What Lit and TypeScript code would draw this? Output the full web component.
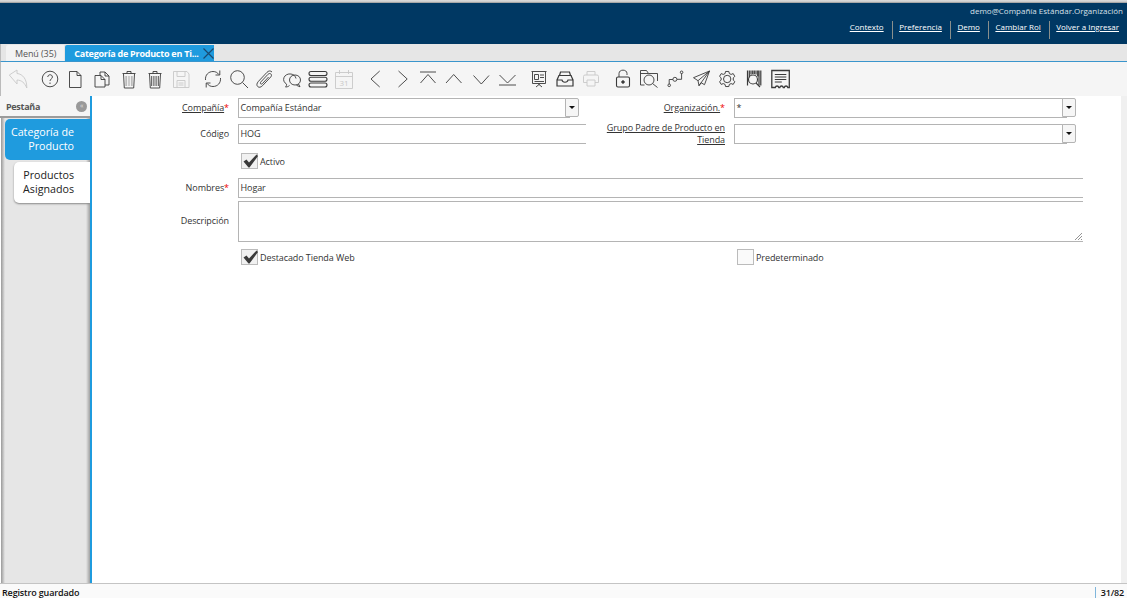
import { LitElement, html, css, svg } from "lit";
import { customElement } from "lit/decorators.js";

const S = (body: unknown) => html`<svg class="ic" viewBox="0 0 24 24" fill="none" stroke="currentColor" stroke-width=".9">${body}</svg>`;

const icons: [unknown, string, number][] = [
  [svg`<path d="M3.300 8L11 3v3.500c6 .5 10 6 9.800 14.500-2-5-5-7.800-9.800-8v4z"/>`, "off", 5],
  [svg`<circle cx="12" cy="12" r="7.800"/><path d="M9.800 10c0-3 4.600-3 4.600 0 0 2-2.400 2-2.400 4"/><path d="M12 15.500v1.500"/>`, "", 0],
  [svg`<path d="M5.500 4.500h7.500l4 4v12H5.500zM13 4.500v4h4"/>`, "", 0],
  [svg`<path d="M10 8V5h5l4 4v9h-4M15 5v4h4"/><path d="M5 8.500h6l4 4V20H5zM11 8.500v4h4"/>`, "", 0],
  [svg`<path d="M6.500 7l.8 14h9.400l.8-14M5.500 6.500h13M10 6.500V4.500h4v2"/><path d="M8.300 9h1.800v10H8.300zM11.300 9h1.400v10h-1.400zM13.900 9h1.800v10h-1.800z" fill="#bbb" stroke="none"/>`, "", 0],
  [svg`<path d="M6.500 7l.8 14h9.400l.8-14M5.500 6.500h13M10 6.500V4.500h4v2"/><path d="M8.700 9v10M10.900 9v10M13.100 9v10M15.300 9v10"/>`, "", 0],
  [svg`<path d="M4.500 4.500h13.500l2 2.500v13.500h-15.500zM8 4.500v5h8v-5M8 20.500v-7h8v7M9.500 16h5M9.500 18h5"/>`, "off", 5],
  [svg`<path d="M4.500 13c-.5-5 3-8.500 7.500-8.500 2.500 0 4.500 1 5.800 3M19.500 11c.5 5-3 8.500-7.500 8.500-2.500 0-4.500-1-5.800-3"/><path d="M18.800 3.500v4.500h-4.300M5.200 20.500V16h4.300"/>`, "", 0],
  [svg`<circle cx="10.500" cy="10.500" r="6.800"/><path d="M15.500 15.500l5.500 5.500"/>`, "", 0],
  [svg`<path d="M19 5c-1.500-1.500-3.500-1.300-5 .3l-8.500 9c-2 2.200-2 4 -.8 5.200 1.200 1.200 3 1.100 5-1l8-8.500c1-1.100 1-2.300.2-3-.8-.8-2-.6-3 .4l-7 7.500c-.7.8-.7 1.500-.2 1.900.5.500 1.200.3 1.900-.4l6-6.400"/>`, "", 0],
  [svg`<path d="M9.500 18.500c-1 1-2.500 1.500-4 1.500 1-1 1.200-2 1-3-2.500-1.300-3.500-4-2.500-6.500 1-2.500 4-4 7-3.500 2.500.4 4.500 2 5 4.500"/><path d="M20.500 13c0 3-2.500 5-5.500 5-3 0-5.500-2-5.500-5s2.500-5 5.500-5 5.500 2 5.500 5z"/><path d="M18.500 17l1.500 2.800-3.500-1.500"/>`, "", 0],
  [svg`<g stroke-width="1.100"><rect x="3" y="4.500" width="18" height="4" rx="2"/><rect x="3" y="10.200" width="18" height="4" rx="2"/><rect x="3" y="16" width="18" height="4" rx="2"/></g>`, "", 0],
  [svg`<path d="M3.500 5.500h17v16h-17zM3.500 9.500h17M7.500 3v4M16.500 3v4"/><text x="12" y="19" font-size="8" text-anchor="middle" fill="currentColor" stroke="none" font-family="Open Sans">31</text>`, "off", 5.6],
  [svg`<path d="M15.700 4L7 12l8.700 8"/>`, "", 0],
  [svg`<path d="M7.500 4l8.700 8-8.700 8"/>`, "", 0],
  [svg`<path d="M3 5h16M3.500 16L11 7.500l7.500 8.500"/>`, "", 0],
  [svg`<path d="M3 16l7.700-8.500L18.500 16"/>`, "", 0],
  [svg`<path d="M3.500 8.500l7.800 8.500L19 8.500"/>`, "", 0],
  [svg`<path d="M3 18h17M3.500 8l8 8 8-8"/>`, "", 4.5],
  [svg`<path d="M4.500 4.500h15M5.500 5v11.500h13V5M12 16.500v1.500M9 20l3-2.500 3 2.500M7.500 7.500h4v5h-4zM13 8h4M13 10.500h4M7.500 14.500h9.500"/>`, "", 0],
  [svg`<g stroke-width="1.200"><path d="M7.500 5h9l1 3.500h-11zM5.500 8.500h13M6 8.500L4 13v6h16v-6l-2-4.500M4 13h5c.5 3 5.500 3 6 0h5"/></g>`, "", 0],
  [svg`<path d="M8 8V4.500h8V8M6 8h12a1.500 1.500 0 011.500 1.500v6H16M8 15.500H4.500v-6A1.500 1.500 0 016 8M8 13h8v6H8z"/>`, "off", 5],
  [svg`<rect x="5.500" y="10" width="13" height="10" rx="1.500" stroke-width="1.100"/><path d="M8 10V6.500c0-4.500 8-4.500 8 0V8"/><circle cx="12" cy="15" r="1.300" fill="currentColor"/>`, "", 0],
  [svg`<path d="M3.500 18V3.500h6l2 3h9V14M3.500 18h4M3.500 6.500h8"/><circle cx="12" cy="13" r="5"/><path d="M15.500 16.500l5 4"/>`, "", 0],
  [svg`<circle cx="5.200" cy="18.300" r="1.300"/><circle cx="10.900" cy="12.300" r="2"/><circle cx="17.600" cy="5.300" r="1.300"/><path d="M5.200 17v-4.500h3.700M13 12.300h4.600V6.500"/>`, "", 0],
  [svg`<path d="M19.500 4L3.500 10.700l4.500 3 1 5 2-3 3.500 2zM8 13.700L19.500 4 9 18.700"/>`, "", 0],
  [svg`<g transform="translate(11.200 12) scale(.82) translate(-12 -12)" stroke-width="1.150"><path d="M10 2.800h4l.6 2.600 2.200 1 2.500-1 2 3.400-1.900 1.800v2.800l1.900 1.800-2 3.400-2.500-1-2.200 1-.6 2.600h-4l-.6-2.600-2.200-1-2.500 1-2-3.400 1.900-1.800v-2.800L2.700 8.800l2-3.400 2.500 1 2.200-1z"/><circle cx="12" cy="12" r="4.500"/></g>`, "", 0],
  [svg`<path d="M4.500 3.500v15M6.300 3.500v7M8 3.500v4M9.700 3.500v3.500M11.300 3.500v3.500M13 3.500v4M14.700 3.500v6M16 3.500v15M17.800 3.500v15" stroke-width="1.200"/><circle cx="10" cy="12.500" r="4.500" stroke-width="1.100"/><path d="M13 16l4 4" stroke-width="1.100"/>`, "", 0],
  [svg`<g transform="translate(-.7 0)"><path d="M3.500 3.500h17.500v17h-1.500c-.5-2-3-2-3.500 0h-1c-.5-2-3-2-3.500 0h-1c-.5-2-3-2-3.500 0H3.500z" stroke-width="1.300"/><path d="M6.500 7.500h11.500M6.500 10h11.500M6.500 12.500h11.500M6.500 15h7" stroke-width="1.200"/></g>`, "", 0],
];

@customElement("app-root")
export class AppRoot extends LitElement {
  static styles = css`
    :host { display: flex; flex-direction: column; height: 598px; width: 1127px; overflow: hidden; background: #fff; font-family: "Open Sans", sans-serif; font-size: 9px; color: #333; }
    .topline { height: 3px; background: linear-gradient(#ddd 0, #c8c8c8 2px, #888 3px); flex: none; }
    .hdr { height: 41px; flex: none; background: #003863; color: #fff; display: flex; flex-direction: column; align-items: flex-end; font-size: 8px; padding-right: 8px; box-sizing: border-box; }
    .who { color: #d8e0e8; padding-top: 3px; line-height: 10px; height: 13px; box-sizing: border-box; margin-right: -4px; }
    .links { display: flex; align-items: flex-start; height: 18px; margin-top: 5px; }
    .links a { color: #fff; text-decoration: underline; padding: 0 8px 6px 6.500px; border-left: 1px solid #8a8f8c; line-height: 12px; }
    .links a:first-child { border: 0; }
    .links a:last-child { padding-right: 0; }
    .tabs { height: 18px; box-sizing: border-box; flex: none; background: #e6e6e6; display: flex; padding: 1px 0 0 5px; align-items: stretch; gap: 1px; border-left: 1px solid #bbb; border-bottom: 1px solid #3a95cc; letter-spacing: -.1px; }
    .tab { padding: 0 8px 0 9px; background: #f3f3f3; color: #555; display: flex; align-items: center; font-size: 9px; border-top-left-radius: 2px; }
    .tab.on { background: #1f9bde; color: #fff; font-weight: 700; padding: 0 0 0 9px; width: 149px; box-sizing: border-box; position: relative; letter-spacing: -.24px; }
    .tab.on svg { position: absolute; right: 0; top: 3px; width: 11px; height: 11px; stroke: #1a4a70; stroke-width: 1.200; }
    .bar { height: 34px; flex: none; background: #f5f5f5; display: flex; align-items: center; padding-left: 4px; border-left: 1px solid #bbb; box-sizing: border-box; }
    .cell { width: 26.350px; flex: none; display: flex; justify-content: center; color: #3a3a3a; }
    .cell.off { color: #c8c8c8; }
    .ic { width: 24px; height: 24px; display: block; flex: none; }
    .main { flex: 1; display: flex; min-height: 0; }
    .side { width: 90px; flex: none; background: linear-gradient(90deg, #fff 1px, #999 1px, #e6e6e6 5px, #e6e6e6 86px, #a0a0a0 90px); box-sizing: border-box; display: flex; flex-direction: column; }
    .phead { height: 22px; box-sizing: border-box; background: #f5f5f5; border-bottom: 2px solid #9b9b9b; display: flex; align-items: center; justify-content: space-between; padding: 0 3px 0 6px; font-weight: 700; color: #555; font-size: 9px; letter-spacing: -.3px; flex: none; }
    .round { width: 11px; height: 11px; border-radius: 50%; background: #999; color: #ddd; font-size: 7px; line-height: 10px; text-align: center; font-weight: 400; }
    .stab { text-align: right; flex: none; box-sizing: border-box; }
    .stab.on { margin: 1px 0 2px 5px; height: 41px; background: #1f9bde; color: #fff; font-size: 10.700px; line-height: 14px; padding: 6px 16px 0 0; border-radius: 5px 0 0 5px; }
    .stab.off { margin: 0 0 0 14px; height: 41px; background: #fff; color: #222; font-size: 10.700px; line-height: 14px; padding: 6px 16px 0 0; border-radius: 5px 0 0 5px; box-shadow: 0 1px 2px #888; }
    .blue { width: 2px; background: #1f9bde; flex: none; }
    .content { flex: 1; background: #fff; }
    .sb { width: 6px; background: #f0f0f0; flex: none; }
    form { display: grid; grid-template-columns: 137px 357px 139px 358px; padding-top: 2px; color: #333; font-size: 9px; letter-spacing: -.08px; }
    .lab { text-align: right; line-height: 12px; display: flex; align-items: center; justify-content: flex-end; padding-bottom: 1px; box-sizing: border-box; }
    .lab u { text-underline-offset: 1px; }
    .lab b { color: #e00; font-weight: 400; }
    .lab.two { padding-left: 10px; }
    .f { margin-left: 9px; box-sizing: border-box; border: 1px solid #b4b4b4; height: 20px; display: flex; align-items: center; padding: 0 0 1px 1.500px; color: #333; position: relative; }
    .f.open { border-right: 0; }
    .f.sel { margin-right: 16px; border-right: 0; }
    .f.sel i { position: absolute; right: -9px; top: -1px; width: 14px; height: 19px; background: #f6f6f6; border: 1px solid #b4b4b4; border-radius: 0 2px 2px 0; box-sizing: border-box; display: flex; align-items: center; justify-content: center; }
    .f.sel i::after { content: ""; border: 3px solid transparent; border-top: 3px solid #111; border-bottom: 0; }
    .wide { grid-column: 2 / 5; }
    .ck { margin: 3px 0 0 9px; display: flex; align-items: center; gap: 2px; height: 16px; padding-left: 3px; }
    .box { width: 17px; height: 16px; box-sizing: border-box; border: 1px solid #bbb; background: #f1f1f1; display: block; flex: none; position: relative; }
    .box svg { width: 17px; height: 16px; display: block; position: absolute; left: 0; top: -1px; }
    .box.empty { background: #fafafa; }
    .r1 { height: 20px; margin-bottom: 6px; }
    .r3 { height: 20px; margin-top: 9px; }
    .ta { height: 41px; margin-top: 3px; margin-bottom: 7px; }
    .lab.ta { align-items: flex-start; padding-top: 14px; }
    .f.ta svg { position: absolute; right: 1px; bottom: 1px; width: 7px; height: 7px; }
    .col2 { grid-column: 2 / 3; margin-top: 0; }
    .col4 { margin-top: 0; }
    .status { height: 15px; flex: none; border-top: 1px solid #c4c4c4; box-sizing: border-box; display: flex; justify-content: space-between; font-size: 9px; letter-spacing: -.15px; color: #111; line-height: 18px; background: #fafafa; padding-left: 2px; overflow: hidden; font-weight: 600; }
    .pg { border-left: 1px solid #7fb6dc; padding: 0 3px 0 5px; margin-top: 3px; line-height: 11px; height: 11px; }
  `;

  render() {
    const check = svg`<path d="M1.500 8.500l3-2 2.500 3L14.500 1.500l1.500 1.500L7.500 14.500h-1z" fill="#3a3a3a"/>`;
    return html`
      <div class="topline"></div>
      <header class="hdr">
        <div class="who">demo@Compañía Estándar.Organización</div>
        <nav class="links"><a>Contexto</a><a>Preferencia</a><a>Demo</a><a>Cambiar Rol</a><a>Volver a Ingresar</a></nav>
      </header>
      <div class="tabs">
        <div class="tab">Menú (35)</div>
        <div class="tab on">Categoría de Producto en Ti...
          <svg viewBox="0 0 11 11" fill="none"><path d="M.5 .5l10 10M10.500 .5l-10 10"/></svg></div>
      </div>
      <div class="bar">
        ${icons.map(([b, c, g]) => html`<span class="cell ${c}" style="margin-right:${g}px">${S(b)}</span>`)}
      </div>
      <div class="main">
        <aside class="side">
          <div class="phead"><span>Pestaña</span><span class="round">«</span></div>
          <div class="stab on">Categoría de<br />Producto</div>
          <div class="stab off">Productos<br />Asignados</div>
        </aside>
        <div class="blue"></div>
        <div class="content">
          <form>
            <div class="lab r1"><span><u>Compañía</u><b>*</b></span></div>
            <div class="f sel r1">Compañía Estándar<i></i></div>
            <div class="lab r1"><span><u>Organización.</u><b>*</b></span></div>
            <div class="f sel r1">*<i></i></div>
            <div class="lab r1">Código</div>
            <div class="f open r1">HOG</div>
            <div class="lab r1 two"><span><u>Grupo Padre de Producto en Tienda</u></span></div>
            <div class="f sel r1"><i></i></div>
            <div></div>
            <div class="ck wide"><span class="box"><svg viewBox="0 0 17 16">${check}</svg></span>Activo</div>
            <div class="lab r3"><span>Nombres<b>*</b></span></div>
            <div class="f open wide r3">Hogar</div>
            <div class="lab ta">Descripción</div>
            <div class="f open wide ta"><svg viewBox="0 0 7 7" stroke="#666" stroke-width=".7"><path d="M0 7l7-7M3 7l4-4M6 7l1-1"/></svg></div>
            <div></div>
            <div class="ck col2"><span class="box"><svg viewBox="0 0 17 16">${check}</svg></span>Destacado Tienda Web</div>
            <div></div>
            <div class="ck col4"><span class="box empty"></span>Predeterminado</div>
          </form>
        </div>
        <div class="sb"></div>
      </div>
      <footer class="status"><span>Registro guardado</span><span class="pg">31/82</span></footer>
    `;
  }
}
